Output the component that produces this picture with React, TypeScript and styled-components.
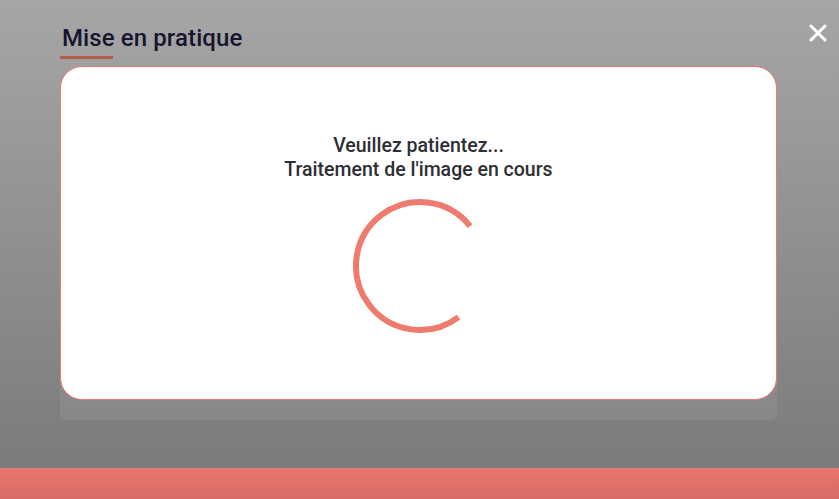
import React from "react";
import styled, { createGlobalStyle } from "styled-components";

const GlobalStyle = createGlobalStyle`
  html, body {
    margin: 0;
    padding: 0;
    height: 100%;
  }
  body {
    font-family: Roboto, "Liberation Sans", sans-serif;
  }
`;

const Page = styled.div`
  display: flex;
  flex-direction: column;
  width: 839px;
  height: 499px;
  overflow: hidden;
`;

const Stage = styled.div`
  position: relative;
  flex: 1;
  background: linear-gradient(to bottom, #a6a6a6 0%, #7b7b7b 100%);
  padding: 23px 62px 0 60px;
  box-sizing: border-box;
`;

const Footer = styled.div`
  height: 31px;
  background: linear-gradient(to bottom, #e9756b, #d96b67);
  border-top: 1px solid #d98a80;
  box-sizing: border-box;
`;

const Title = styled.h2`
  margin: 0;
  padding-left: 2px;
  font-size: 24px;
  line-height: 30px;
  font-weight: 500;
  color: #17152f;
  letter-spacing: 0.1px;
`;

const TitleBar = styled.div`
  width: 53px;
  height: 3px;
  margin-top: 3px;
  background: #b35b51;
`;

const CloseButton = styled.button`
  position: absolute;
  top: 22px;
  right: 10px;
  width: 22px;
  height: 22px;
  padding: 0;
  border: 0;
  background: none;
  cursor: pointer;
  display: flex;
  align-items: center;
  justify-content: center;
`;

const Panel = styled.div`
  margin-top: 7px;
  padding-bottom: 20px;
  background: rgba(255, 255, 255, 0.07);
  border-radius: 22px 22px 7px 7px;
`;

const Card = styled.div`
  height: 334px;
  background: #ffffff;
  border: 1px solid #ea7a6e;
  border-radius: 22px;
  box-sizing: border-box;
  display: flex;
  flex-direction: column;
  align-items: center;
  padding-top: 67px;
`;

const Message = styled.p`
  margin: 0;
  text-align: center;
  font-size: 19.5px;
  line-height: 24px;
  font-weight: 500;
  color: #2e2e35;
  letter-spacing: 0;
`;

const Spinner = styled.svg`
  margin-top: 14px;
  margin-left: 2px;
`;

const Loader = () => {
  const r = 64;
  const c = 2 * Math.PI * r;
  const arc = (268 / 360) * c;
  return (
    <Spinner width="140" height="140" viewBox="0 0 140 140">
      <circle
        cx="70"
        cy="70"
        r={r}
        fill="none"
        stroke="#ee7b6e"
        strokeWidth="6"
        strokeDasharray={`${arc} ${c}`}
        transform="rotate(53 70 70)"
      />
    </Spinner>
  );
};

export default function App() {
  return (
    <Page>
      <GlobalStyle />
      <Stage>
        <Title>Mise en pratique</Title>
        <TitleBar />
        <CloseButton aria-label="Fermer">
          <svg width="18" height="18" viewBox="0 0 18 18">
            <path
              d="M2 2 L16 16 M16 2 L2 16"
              stroke="#ffffff"
              strokeWidth="3"
              strokeLinecap="round"
            />
          </svg>
        </CloseButton>
        <Panel>
          <Card>
            <Message>
              Veuillez patientez...
              <br />
              Traitement de l'image en cours
            </Message>
            <Loader />
          </Card>
        </Panel>
      </Stage>
      <Footer />
    </Page>
  );
}
